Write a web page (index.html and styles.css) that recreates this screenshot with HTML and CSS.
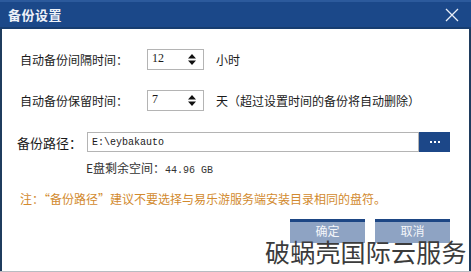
FILE: index.html
```html
<!DOCTYPE html>
<html lang="zh-CN">
<head>
<meta charset="utf-8">
<title>备份设置</title>
<link rel="stylesheet" href="styles.css">
</head>
<body>
<div class="window">
  <div class="titlebar">
    <span class="title">备份设置</span>
    <svg class="close" width="14" height="14" viewBox="0 0 14 14"><path d="M1 1 L13 13 M13 1 L1 13" stroke="#e8eef8" stroke-width="1.3" fill="none"/></svg>
  </div>
  <div class="content">
    <div class="row row-first">
      <span class="label">自动备份间隔时间：</span>
      <div class="spin">
        <span class="val">12</span>
        <svg class="arrows" width="8" height="11" viewBox="0 0 8 11"><path d="M4 0 L8 4.5 L0 4.5 Z M4 11 L8 6.5 L0 6.5 Z" fill="#111"/></svg>
      </div>
      <span class="unit">小时</span>
    </div>
    <div class="row row-second">
      <span class="label">自动备份保留时间：</span>
      <div class="spin">
        <span class="val">7</span>
        <svg class="arrows" width="8" height="11" viewBox="0 0 8 11"><path d="M4 0 L8 4.5 L0 4.5 Z M4 11 L8 6.5 L0 6.5 Z" fill="#111"/></svg>
      </div>
      <span class="unit">天（超过设置时间的备份将自动删除）</span>
    </div>
    <div class="row row-path">
      <span class="label-path">备份路径：</span>
      <div class="path-input"><span class="mono">E:\eybakauto</span></div>
      <div class="browse">
        <svg width="10" height="3" viewBox="0 0 10 3"><rect x="0" y="0" width="2" height="2" fill="#fff"/><rect x="4" y="0" width="2" height="2" fill="#fff"/><rect x="8" y="0" width="2" height="2" fill="#fff"/></svg>
      </div>
    </div>
    <div class="space">E盘剩余空间：<span class="mono-s">44.96 GB</span></div>
    <div class="note">注：“备份路径”建议不要选择与易乐游服务端安装目录相同的盘符。</div>
    <div class="actions">
      <div class="btn">确定</div>
      <div class="btn">取消</div>
    </div>
  </div>
  <div class="watermark">破蜗壳国际云服务</div>
</div>
</body>
</html>
```

FILE: styles.css
```css
html, body {
  margin: 0;
  padding: 0;
  background: #ffffff;
}
body {
  width: 471px;
  height: 272px;
  overflow: hidden;
  font-family: "Noto Sans CJK SC", "Noto Sans", sans-serif;
  font-size: 12px;
  color: #1a1a1a;
}
.window {
  position: relative;
  width: 471px;
  height: 272px;
  box-sizing: border-box;
  border-bottom: 1px solid #b8bcc2;
  display: flex;
  flex-direction: column;
}
.titlebar {
  height: 29px;
  box-sizing: border-box;
  background: #1b4889;
  border-top: 2px solid #2c5a9c;
  border-bottom: 2px solid #173d70;
  display: flex;
  align-items: center;
  justify-content: space-between;
  padding: 0 12px 0 8px;
  flex-shrink: 0;
}
.title {
  color: #eef2f8;
  font-size: 13px;
  font-weight: bold;
  letter-spacing: 0.5px;
}
.close {
  display: block;
}
.content {
  flex: 1;
  border-left: 2px solid #1f3c5e;
  border-right: 2px solid #1f3c5e;
  padding-left: 18px;
  display: flex;
  flex-direction: column;
}
.row {
  display: flex;
  align-items: center;
  height: 21px;
}
.row-first { margin-top: 20px; }
.row-second { margin-top: 20px; }
.row-path { margin-top: 21px; height: 20px; }
.label {
  width: 127px;
  flex-shrink: 0;
}
.spin {
  width: 57px;
  height: 21px;
  box-sizing: border-box;
  border: 1px solid #b4b4b4;
  display: flex;
  align-items: center;
  justify-content: space-between;
  padding: 0 7px 0 4px;
}
.val {
  font-family: "Liberation Serif", serif;
  font-size: 12px;
  margin-top: -3px;
}
.arrows { display: block; }
.unit {
  margin-left: 12px;
}
.label-path {
  width: 70px;
  margin-left: -3px;
  flex-shrink: 0;
  font-size: 13px;
}
.path-input {
  width: 332px;
  height: 20px;
  box-sizing: border-box;
  border: 1px solid #b4b4b4;
  display: flex;
  align-items: center;
  padding-left: 4px;
}
.mono {
  font-family: "Liberation Mono", monospace;
  font-size: 10px;
}
.browse {
  width: 31px;
  height: 20px;
  background: #1c4788;
  display: flex;
  align-items: center;
  justify-content: center;
}
.browse svg { display: block; }
.space {
  margin-top: 7px;
  margin-left: 66px;
  color: #333;
}
.mono-s {
  font-family: "Liberation Mono", monospace;
  font-size: 10px;
}
.note {
  margin-top: 14px;
  color: #d28a2e;
}
.actions {
  margin-top: 12px;
  display: flex;
  justify-content: flex-end;
  gap: 10px;
  padding-right: 19px;
}
.btn {
  width: 75px;
  height: 24px;
  box-sizing: border-box;
  border-top: 3px solid #1d4684;
  background: #8ea3c3;
  color: #f4f6fa;
  text-align: center;
  line-height: 18px;
}
.watermark {
  position: absolute;
  left: 265px;
  top: 234px;
  font-size: 25px;
  line-height: 34px;
  color: #3b3b3b;
  white-space: nowrap;
  letter-spacing: 0.2px;
}
```
